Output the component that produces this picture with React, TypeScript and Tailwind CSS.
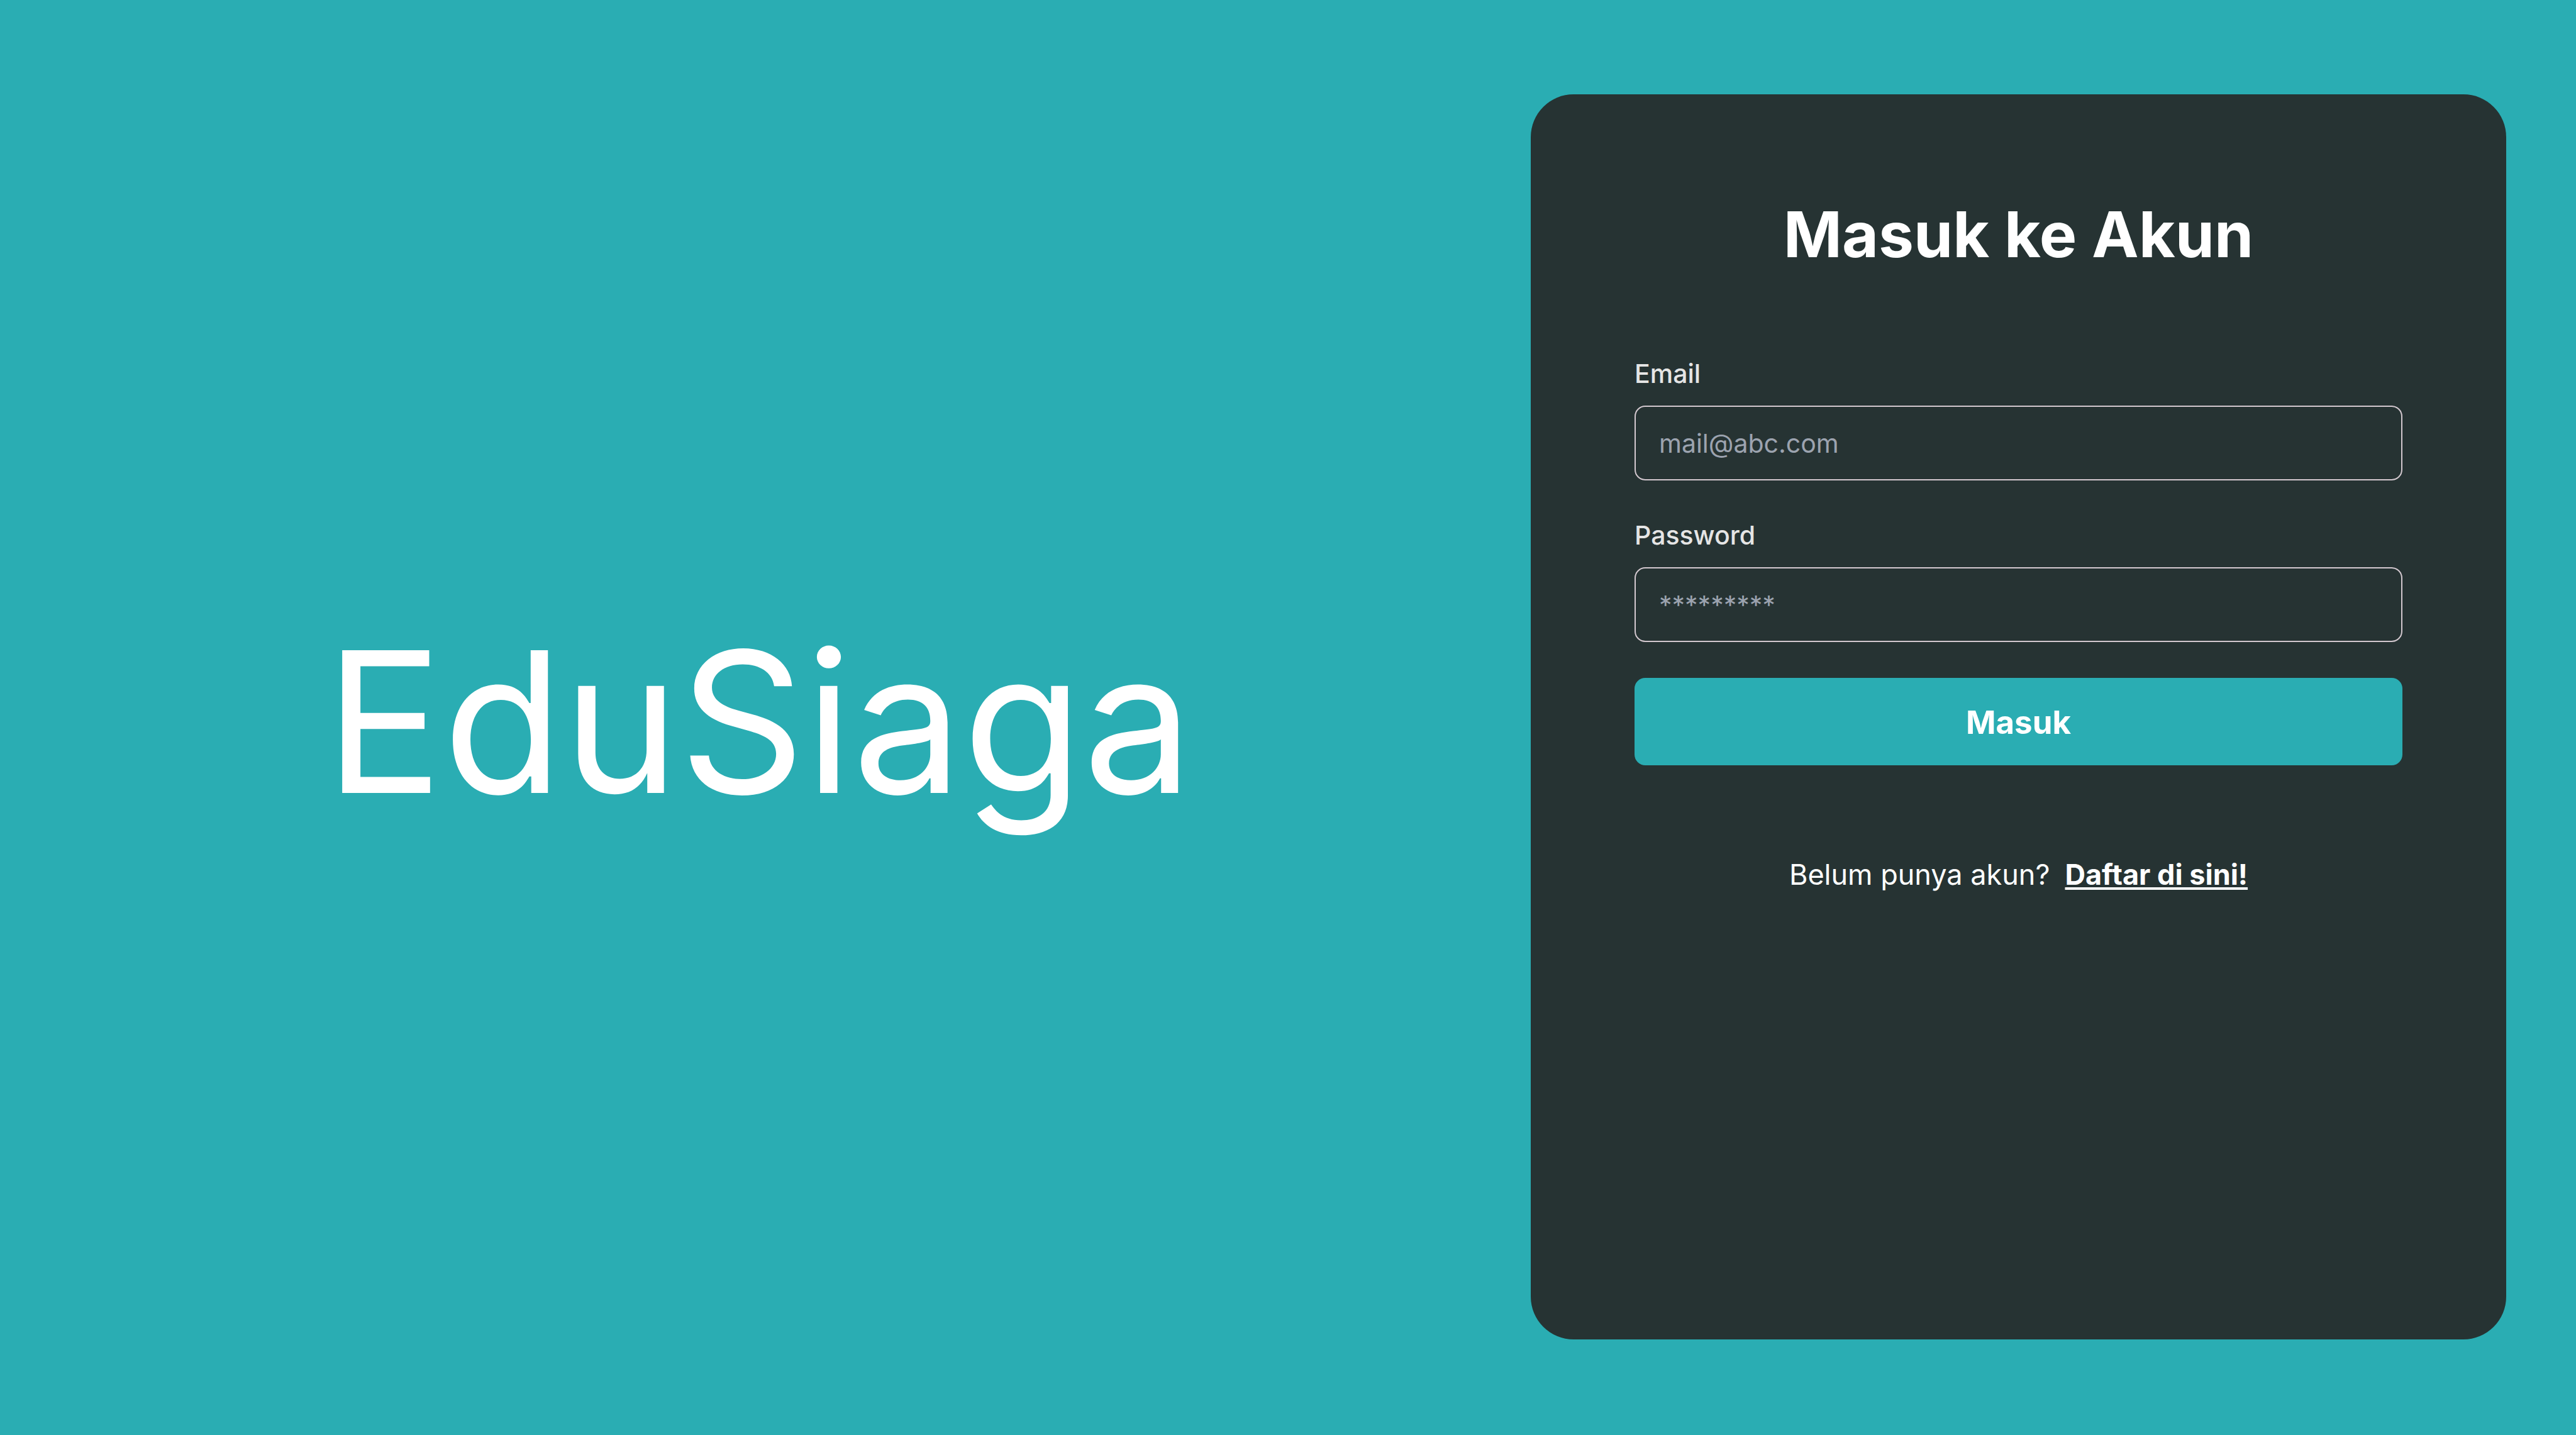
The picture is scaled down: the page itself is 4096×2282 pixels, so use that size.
import type { InputHTMLAttributes } from "react";

type FieldProps = InputHTMLAttributes<HTMLInputElement> & {
  id: string;
  label: string;
};

function Field({ id, label, ...input }: FieldProps) {
  return (
    <div className="flex flex-col gap-[21px]">
      <label htmlFor={id} className="text-[41px] leading-[60px] font-medium text-[#e5e5e5]">
        {label}
      </label>
      <input
        id={id}
        name={id}
        className="h-[119px] w-full rounded-[17px] border-2 border-[#d3c8cf] bg-transparent px-[37px] text-[41px] text-white placeholder:text-[#9ca3af]"
        {...input}
      />
    </div>
  );
}

export default function App() {
  return (
    <main className="grid min-h-screen grid-cols-[2434fr_1551fr] bg-[#2aadb3] pt-[150px] pr-[111px] pb-[152px] font-['Inter',sans-serif] text-white">
      <section className="flex items-center justify-center pt-4 pr-5">
        <h1 className="text-[312px] leading-none font-normal">EduSiaga</h1>
      </section>

      <section className="rounded-[68px] bg-[#263333] p-[165px]">
        <h2 className="text-center text-[100px] leading-[116px] font-bold">Masuk ke Akun</h2>

        <form className="mt-[133px] flex flex-col gap-[57px]" onSubmit={(e) => e.preventDefault()}>
          <Field id="email" label="Email" type="email" placeholder="mail@abc.com" />
          <Field id="password" label="Password" type="password" placeholder="*********" />
          <button
            type="submit"
            className="h-[139px] w-full rounded-[17px] bg-[#2aadb3] pt-1 text-[51px] font-bold"
          >
            Masuk
          </button>
        </form>

        <p className="mt-[142px] flex justify-center gap-6 text-[45px] leading-[64px]">
          <span>Belum punya akun?</span>
          <a href="#daftar" className="font-bold underline decoration-4 underline-offset-4">
            Daftar di sini!
          </a>
        </p>
      </section>
    </main>
  );
}
